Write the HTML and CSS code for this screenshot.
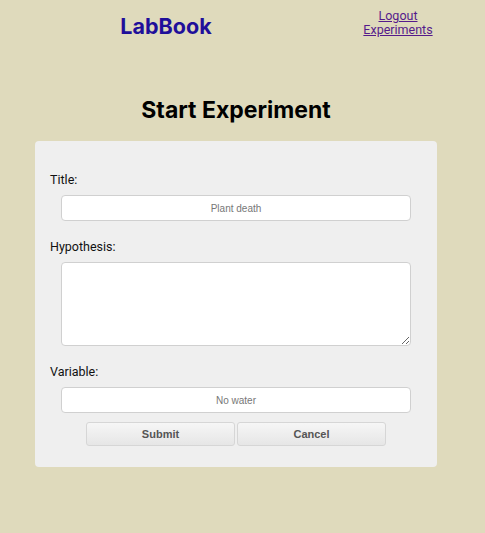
FILE: index.html
```html
<!DOCTYPE html>
<html>
<head>
<meta charset="utf-8">
<link rel="stylesheet" href="styles.css">
</head>
<body>
<header class="top">
  <div class="brand">LabBook</div>
  <nav class="links">
    <a href="#logout">Logout</a>
    <a href="#experiments">Experiments</a>
  </nav>
</header>
<main class="main">
  <h1 class="heading">Start Experiment</h1>
  <form class="card">
    <label class="label" for="title">Title:</label>
    <input class="field" id="title" type="text" placeholder="Plant death">
    <label class="label" for="hyp">Hypothesis:</label>
    <textarea class="field area" id="hyp"></textarea>
    <label class="label" for="var">Variable:</label>
    <input class="field" id="var" type="text" placeholder="No water">
    <div class="actions">
      <button class="btn" type="button">Submit</button>
      <button class="btn" type="button">Cancel</button>
    </div>
  </form>
</main>
</body>
</html>
```
FILE: styles.css
```css
html, body {
  margin: 0;
  padding: 0;
  background: #dfdabc;
}
body {
  width: 485px;
  height: 533px;
  font-family: Roboto, "Liberation Sans", sans-serif;
}
.top {
  display: flex;
  align-items: center;
  height: 50px;
}
.brand {
  flex: 0 0 313px;
  padding-left: 19px;
  box-sizing: border-box;
  text-align: center;
  font-family: Inter, Roboto, sans-serif;
  font-weight: 700;
  font-size: 21.5px;
  color: #1f0f9a;
  margin-top: 1px;
}
.links {
  flex: 0 0 170px;
  display: flex;
  flex-direction: column;
  align-items: center;
  margin-top: -4px;
}
.links a {
  font-family: Roboto, sans-serif;
  font-size: 12.5px;
  line-height: 14px;
  color: #551a8b;
}
.main {
  display: flex;
  flex-direction: column;
  align-items: flex-start;
}
.heading {
  width: 472px;
  text-align: center;
  font-family: Inter, Roboto, sans-serif;
  font-weight: 700;
  font-size: 23px;
  margin: 46px 0 17px 0;
  line-height: 28px;
  color: #000;
}
.card {
  margin-left: 35px;
  width: 402px;
  height: 326px;
  box-sizing: border-box;
  background: #efefef;
  border-radius: 4px;
  padding: 31px 26px 0 15px;
  display: flex;
  flex-direction: column;
}
.label {
  font-size: 12.5px;
  color: #111;
  line-height: 15px;
  margin-bottom: 8px;
}
.field {
  margin-left: 11px;
  width: 350px;
  height: 26px;
  box-sizing: border-box;
  border: 1px solid #d0d0d0;
  border-radius: 4px;
  background: #fff;
  font-family: "Liberation Sans", Arial, sans-serif;
  font-size: 10px;
  text-align: center;
  margin-bottom: 18px;
  padding: 0;
}
.field::placeholder {
  color: #777;
  font-family: "Liberation Sans", Arial, sans-serif;
}
.area {
  height: 84px;
  resize: vertical;
  margin-bottom: 18px;
}
#var {
  margin-bottom: 9px;
}
.actions {
  display: flex;
  gap: 2px;
  margin-left: 36px;
}
.btn {
  width: 149px;
  height: 24px;
  border: 1px solid #d6d6d6;
  border-radius: 3px;
  background: linear-gradient(#f6f6f6, #e6e6e6);
  font-family: "Liberation Sans", Arial, sans-serif;
  font-weight: 700;
  font-size: 11px;
  color: #555;
  padding: 0;
}
```
